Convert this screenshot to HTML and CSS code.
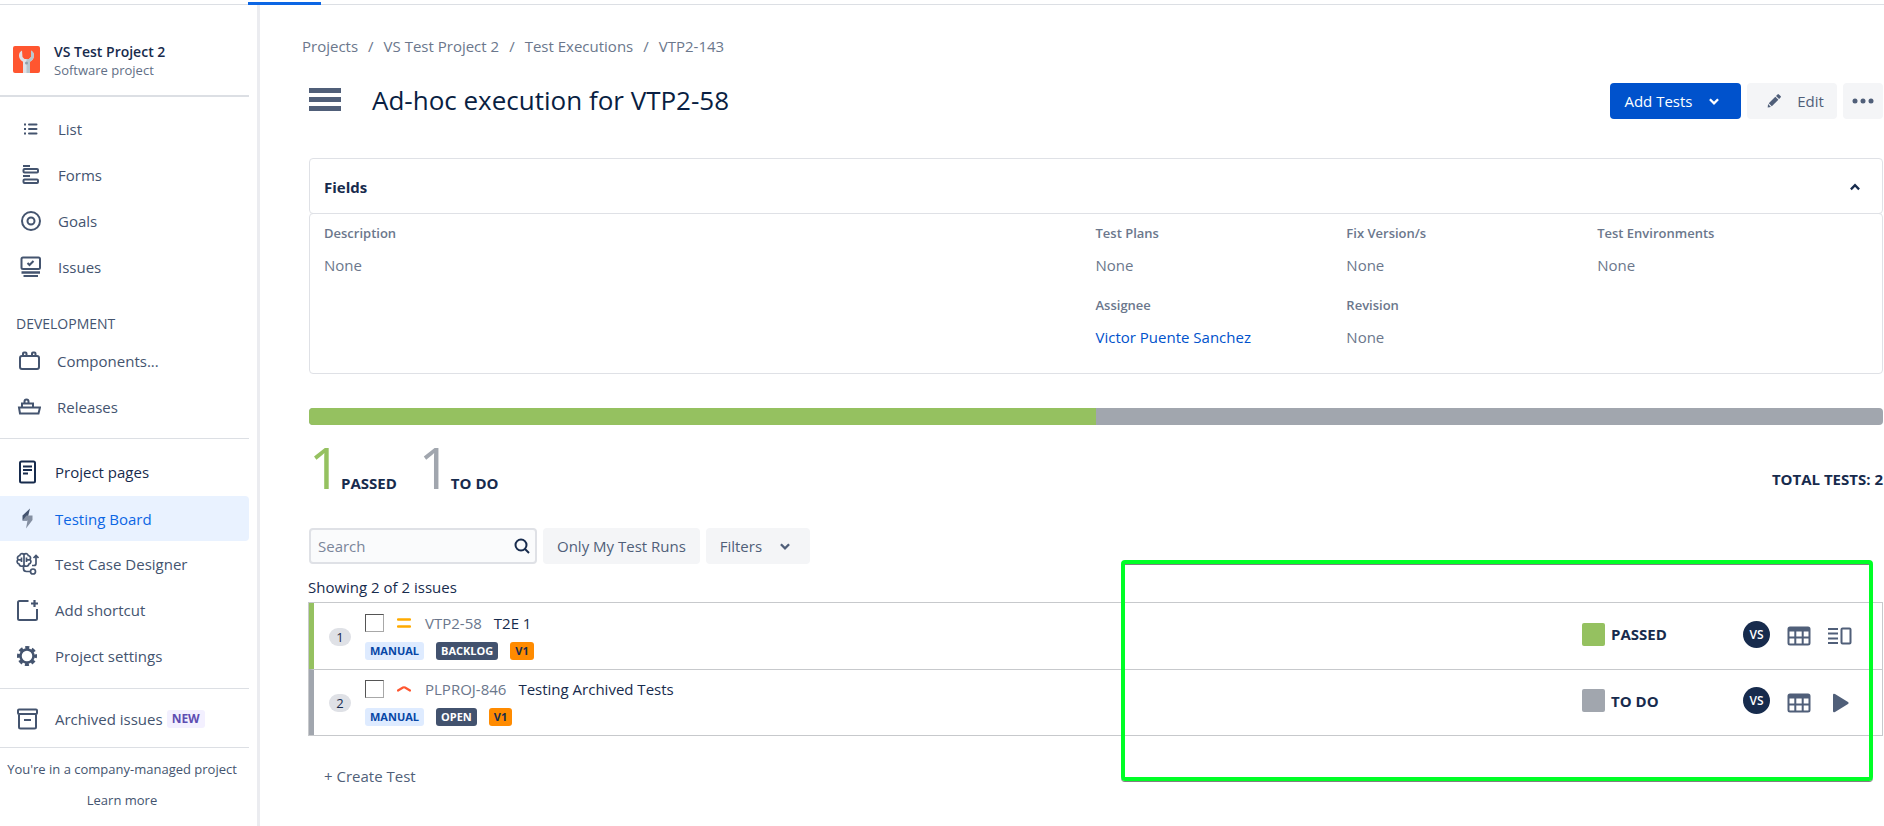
FILE: index.html
```html
<!DOCTYPE html>
<html lang="en">
<head>
<meta charset="utf-8">
<title>Ad-hoc execution for VTP2-58</title>
<link rel="stylesheet" href="styles.css">
</head>
<body>
<header class="topbar"><span class="topbar-tab"></span></header>
<div class="shell">
  <aside class="sidebar">
    <div class="project">
      <svg class="project-logo" viewBox="0 0 27 27"><rect width="27" height="27" rx="2" fill="#ff5630"/><path d="M9 4.500C6 6 5.500 9 6.500 12c.7 1.800 2 3 3.500 3.800V27h7V15.800c1.500-.8 2.800-2 3.500-3.800 1-3 .5-6-2.500-7.500v6.500l-2 2h-4.500l-2-2z" fill="#dfe1e6"/><path d="M18 4.500v6.500l-2 2h-2.500V27H17V15.800c1.500-.8 2.800-2 3.500-3.800 1-3 .5-6-2.500-7.500z" fill="#b8c7ce"/><circle cx="13.500" cy="17" r="1.500" fill="#8fa0aa"/></svg>
      <div><div class="project-name">VS Test Project 2</div><div class="project-type">Software project</div></div>
    </div>
    <nav class="nav nav-plan">
      <a href="#"><svg viewBox="0 0 24 24"><path d="M5 7.500h2M5 12h2M5 16.500h2" stroke-width="2"/><path d="M10 7.500h7.500M10 12h7.500M10 16.500h7.500" stroke-width="2" stroke-linecap="round"/></svg>List</a>
      <a href="#"><svg viewBox="0 0 24 24"><path d="M4 3h7M4 13h7" stroke-width="2"/><rect x="4.500" y="6" width="14.500" height="3.500" rx="1"/><rect x="4.500" y="16.500" width="14.500" height="3.500" rx="1"/></svg>Forms</a>
      <a href="#"><svg viewBox="0 0 24 24"><circle cx="12" cy="12" r="9"/><circle cx="12" cy="12" r="3.500"/></svg>Goals</a>
      <a href="#"><svg viewBox="0 0 24 24"><rect x="2.500" y="2.500" width="18.500" height="11.500" rx="1.500"/><path d="M8.500 8l2 2 4-4"/><path d="M2.500 17.500h18.500" stroke-width="2.500"/><path d="M4.500 21h14.500"/></svg>Issues</a>
    </nav>
    <h2 class="nav-heading">DEVELOPMENT</h2>
    <nav class="nav nav-dev">
      <a href="#"><svg viewBox="0 0 24 24"><rect x="3" y="7" width="19" height="13" rx="2"/><path d="M6 7V4.500q0-1 1-1h1.500q1 0 1 1V7M15 7V4.500q0-1 1-1h1.500q1 0 1 1V7"/></svg>Components...</a>
      <a href="#"><svg viewBox="0 0 24 24"><path d="M2 12.500h21l-1.500 6H3zM5 12V8.500h11v3.500M7.500 8.500V6.500q0-2 2-2t2 2v2"/></svg>Releases</a>
    </nav>
    <nav class="nav nav-tools">
      <a href="#" class="strong"><svg viewBox="0 0 24 24"><rect x="5" y="1.500" width="15" height="21" rx="1.500"/><path d="M8 6.500h9M8 10h9M8 13.500h5"/></svg>Project pages</a>
      <a href="#" class="active"><svg viewBox="0 0 24 24"><path d="M15 1.500L7.500 8.500v5h4.500z" fill="#44546f" stroke="none"/><path d="M11.500 8.500h6V13L11 21.500l1.500-8-5 0z" fill="#8590a2" stroke="none"/></svg>Testing Board</a>
      <a href="#"><svg viewBox="0 0 24 24"><path d="M9 2v13M9 2.500C7 .8 5 2 4.800 3.500 2.500 4 2 6 3 7.500c-1.500 1.500-1 4 1 4.500.5 2.500 3.500 3 5 1M9 2.500c2-1.700 4-.5 4.200 1C15.500 4 16 6 15 7.500c1.500 1.500 1 4-1 4.500-.5 2.500-3.500 3-5 1M6.500 5.500v4.500M11.500 5.500v4.500M3 7.800h3.500M11.500 7.800H15M8.500 15v1.500q0 3 3 3h4M17 13.500h2q2 0 2-2V4M18.500 6L21 3.500 23.500 6" stroke-width="1.700"/><circle cx="18" cy="19.500" r="2.500" stroke-width="1.700"/></svg>Test Case Designer</a>
      <a href="#"><svg viewBox="0 0 24 24"><path d="M13.500 3H4.500Q3 3 3 4.500v16Q3 22 4.500 22h16q1.500 0 1.500-1.500V11"/><path d="M19.500 2v7M16 5.500h7" stroke-width="2.200"/></svg>Add shortcut</a>
      <a href="#"><svg viewBox="0 0 24 24"><circle cx="12" cy="12" r="6.500" stroke-width="2.500"/><circle cx="12" cy="12" r="8.500" stroke-width="3" stroke-dasharray="4 2.676" stroke-dashoffset="2"/></svg>Project settings</a>
    </nav>
    <nav class="nav nav-archive">
      <a href="#"><svg viewBox="0 0 24 24"><rect x="3" y="2.500" width="19" height="4.500" rx="1"/><path d="M4 7.500v12.500q0 1.500 1.500 1.500h14q1.500 0 1.500-1.500V7.500M9 13h7"/></svg>Archived issues <span class="new">NEW</span></a>
    </nav>
    <div class="managed"><p>You're in a company-managed project</p><a href="#">Learn more</a></div>
  </aside>
  <main class="main">
    <nav class="crumbs"><a href="#">Projects</a><span>/</span><a href="#">VS Test Project 2</a><span>/</span><a href="#">Test Executions</a><span>/</span><a href="#">VTP2-143</a></nav>
    <div class="content">
      <div class="titlebar">
        <button class="menu" aria-label="Menu"><i></i><i></i><i></i></button>
        <h1>Ad-hoc execution for VTP2-58</h1>
        <div class="actions">
          <button class="btn primary">Add Tests<svg viewBox="0 0 12 12"><path d="M2.500 4.500L6 8l3.500-3.500"/></svg></button>
          <button class="btn edit"><svg viewBox="0 0 16 16"><path d="M2 10.500L9.500 3l3.500 3.500-7.500 7.500zM10.300 2.200L12 .5q.8-.8 1.600 0l1.900 1.900q.8.800 0 1.600l-1.700 1.700zM1.200 11.500l3.300 3.300L.8 15.500z" fill="currentColor" stroke="none"/></svg>Edit</button>
          <button class="btn more" aria-label="More"><svg viewBox="0 0 22 6"><circle cx="3" cy="3" r="2.500"/><circle cx="11" cy="3" r="2.500"/><circle cx="19" cy="3" r="2.500"/></svg></button>
        </div>
      </div>
      <section class="fields">
        <button class="fields-head">Fields<svg viewBox="0 0 12 12"><path d="M2.500 8L6 4.500 9.500 8"/></svg></button>
        <div class="fields-body">
          <dl class="tall"><dt>Description</dt><dd>None</dd></dl>
          <dl><dt>Test Plans</dt><dd>None</dd></dl>
          <dl><dt>Fix Version/s</dt><dd>None</dd></dl>
          <dl><dt>Test Environments</dt><dd>None</dd></dl>
          <dl><dt>Assignee</dt><dd><a href="#">Victor Puente Sanchez</a></dd></dl>
          <dl><dt>Revision</dt><dd>None</dd></dl>
        </div>
      </section>
      <div class="progress"><span class="passed" style="width:50%"></span></div>
      <div class="summary">
        <div class="count green"><b>1</b>PASSED</div>
        <div class="count gray"><b>1</b>TO DO</div>
        <div class="total">TOTAL TESTS: 2</div>
      </div>
      <div class="filters">
        <div class="search"><input type="text" placeholder="Search" aria-label="Search"><svg viewBox="0 0 16 16"><circle cx="7" cy="7" r="5.500"/><path d="M11 11l4 4"/></svg></div>
        <button class="btn">Only My Test Runs</button>
        <button class="btn drop">Filters<svg viewBox="0 0 12 12"><path d="M2.500 4.500L6 8l3.500-3.500"/></svg></button>
      </div>
      <p class="showing">Showing 2 of 2 issues</p>
      <div class="results">
        <ul class="tests">
          <li class="test green">
            <span class="num">1</span>
            <div class="info">
              <div class="line"><input type="checkbox" aria-label="Select VTP2-58"><svg class="prio" viewBox="0 0 14 14"><path d="M1 3.500h12M1 10.500h12" stroke="#ffab00" stroke-width="2.500" stroke-linecap="round"/></svg><a class="key" href="#">VTP2-58</a><span>T2E 1</span></div>
              <div class="tags"><span class="tag manual">MANUAL</span><span class="tag state">BACKLOG</span><span class="tag version">V1</span></div>
            </div>
            <div class="status"><i></i>PASSED</div>
            <span class="avatar">VS</span>
            <button class="icon" aria-label="Grid"><svg viewBox="0 0 24 24"><rect x="1.500" y="3.500" width="21" height="17" rx="1.500"/><path d="M1 4h22v3.500H1z" fill="currentColor" stroke="none"/><path d="M1 13.500h22M8.300 7v13M15.700 7v13"/></svg></button>
            <button class="icon" aria-label="Details"><svg viewBox="0 0 24 24"><path d="M0 5h10M0 9.500h10M0 14.500h10M0 19h10"/><rect x="13.500" y="4.500" width="9" height="15" rx="1"/></svg></button>
          </li>
          <li class="test gray">
            <span class="num">2</span>
            <div class="info">
              <div class="line"><input type="checkbox" aria-label="Select PLPROJ-846"><svg class="prio" viewBox="0 0 14 14"><path d="M1 8.500l5-3q1-.5 2 0l5 3" fill="none" stroke="#ff5630" stroke-width="2.200" stroke-linecap="round"/></svg><a class="key" href="#">PLPROJ-846</a><span>Testing Archived Tests</span></div>
              <div class="tags"><span class="tag manual">MANUAL</span><span class="tag state">OPEN</span><span class="tag version">V1</span></div>
            </div>
            <div class="status"><i></i>TO DO</div>
            <span class="avatar">VS</span>
            <button class="icon" aria-label="Grid"><svg viewBox="0 0 24 24"><rect x="1.500" y="3.500" width="21" height="17" rx="1.500"/><path d="M1 4h22v3.500H1z" fill="currentColor" stroke="none"/><path d="M1 13.500h22M8.300 7v13M15.700 7v13"/></svg></button>
            <button class="icon" aria-label="Run"><svg viewBox="0 0 24 24"><path d="M5 4q0-2 2-1l13 8q1.500 1 0 2L7 21q-2 1-2-1z" fill="currentColor" stroke="none"/></svg></button>
          </li>
        </ul>
        <div class="highlight"></div>
      </div>
      <button class="create">+ Create Test</button>
    </div>
  </main>
</div>
</body>
</html>
```
FILE: styles.css
```css
* { box-sizing: border-box; }
body { margin: 0; font-family: "Open Sans", "Noto Sans", sans-serif; font-size: 15px; line-height: 20px; color: #172b4d; background: #fff; }
a { color: inherit; text-decoration: none; }
button { font: inherit; color: inherit; border: 0; background: none; padding: 0; }
h1, h2, p, ul, dl, dd { margin: 0; padding: 0; }
svg { fill: none; stroke: currentColor; stroke-width: 2; flex: none; }

.topbar { height: 5px; border-bottom: 1px solid #dcdfe4; padding-left: 248px; }
.topbar-tab { display: block; position: relative; top: 2px; width: 73px; height: 3px; background: #0c66e4; }
.shell { display: flex; min-height: calc(100vh - 5px); }

.sidebar { flex: none; width: 260px; padding-right: 8px; border-right: 3px solid #ebecf0; color: #44546f; }
.project { display: flex; gap: 14px; height: 92px; padding: 38px 0 0 13px; border-bottom: 2px solid #dcdfe4; }
.project-logo { width: 27px; height: 27px; margin-top: 3px; stroke: none; }
.project-name { font-weight: 600; font-size: 14px; line-height: 18px; color: #172b4d; }
.project-type { font-size: 13px; line-height: 18px; color: #626f86; }
.nav a { display: flex; align-items: center; height: 46px; }
.nav svg { width: 24px; height: 24px; }
.nav-plan { padding: 9px 0 0 19px; }
.nav-plan svg { margin-right: 15px; }
.nav-heading { padding: 24px 0 4px 16px; font-size: 14px; line-height: 20px; font-weight: 400; }
.nav-dev { height: 101px; padding: 0 0 0 17px; border-bottom: 1px solid #dcdfe4; }
.nav-dev svg { margin-right: 16px; }
.nav-tools { height: 250px; padding-top: 9px; border-bottom: 1px solid #dcdfe4; }
.nav-tools a, .nav-archive a { padding-left: 15px; }
.nav-tools svg, .nav-archive svg { margin-right: 16px; }
.nav .strong { height: 48px; color: #172b4d; }
.nav .active { height: 45px; background: #e9f2ff; color: #0c66e4; border-radius: 0 4px 4px 0; }
.nav-archive { height: 59px; padding-top: 7px; border-bottom: 1px solid #dcdfe4; }
.new { margin-left: 4px; padding: 0 5px; font-size: 12px; line-height: 18px; font-weight: 700; color: #5e4db2; background: #f3f0ff; border-radius: 3px; }
.managed { padding: 11px 5px 0 0; text-align: center; font-size: 13px; }
.managed p { margin-bottom: 11px; }

.main { flex: 1; min-width: 0; padding: 31px 1px 0 42px; }
.crumbs { display: flex; gap: 10px; color: #6b778c; }
.content { padding-left: 7px; }
.titlebar { display: flex; align-items: center; margin-top: 25px; height: 40px; }
.menu { display: grid; gap: 4px; width: 32px; margin: 0 31px 4px 0; }
.menu i { height: 5px; background: #505f79; }
h1 { font-size: 26px; line-height: 32px; padding-bottom: 2px; font-weight: 400; color: #091e42; }
.actions { display: flex; gap: 6px; margin-left: auto; }
.btn { display: flex; align-items: center; justify-content: center; height: 36px; padding: 0 14px; border-radius: 4px; background: #f4f5f7; color: #505f79; white-space: nowrap; }
.btn svg { width: 14px; height: 14px; }
.primary { width: 131px; gap: 14px; padding: 0 18px 0 12px; background: #0052cc; color: #fff; }
.edit { width: 90px; gap: 16px; padding: 0 14px 0 21px; }
.more { width: 40px; padding: 0; }
.btn.more svg { width: 22px; height: 6px; fill: currentColor; stroke: none; }
.fields { margin-top: 37px; }
.fields-head { display: flex; width: 100%; justify-content: space-between; align-items: center; height: 56px; padding: 2px 20px 0 14px; border: 1px solid #dfe1e6; border-radius: 4px; font-weight: 700; }
.fields-head svg { width: 14px; height: 14px; }
.fields-body { display: grid; grid-template-columns: 772fr 251fr 251fr 285fr; row-gap: 20px; margin-top: -1px; padding: 9px 0 26px 14px; border: 1px solid #dfe1e6; border-radius: 4px; color: #6b778c; }
.tall { grid-row: span 2; }
dt { margin-bottom: 12px; font-size: 13px; font-weight: 600; }
dd a { color: #0052cc; }
.progress { margin-top: 34px; height: 17px; border-radius: 4px; overflow: hidden; background: #a1a6ae; }
.passed { display: block; height: 100%; background: #95c160; }
.summary { display: flex; align-items: flex-start; gap: 22px; height: 103px; font-weight: 700; }
.count { display: flex; align-items: baseline; line-height: 84px; }
.count b { font-size: 56px; font-weight: 400; }
.count.green b { color: #95c160; }
.count.gray b { color: #a1a6ae; }
.total { margin: 44px 0 0 auto; }
.filters { display: flex; gap: 6px; }
.search { display: flex; align-items: center; width: 228px; height: 36px; padding: 0 5px 0 7px; border: 2px solid #dfe1e6; border-radius: 4px; background: #fafbfc; }
.search input { flex: 1; min-width: 0; padding: 0; border: 0; outline: 0; background: none; font: inherit; color: inherit; }
.search input::placeholder { color: #7a869a; opacity: 1; }
.search svg { width: 16px; height: 16px; }
.drop { width: 104px; gap: 16px; padding-right: 18px; }
.showing { margin: 13px 0 5px -1px; }
.results { position: relative; margin-left: -1px; }
.tests { list-style: none; border: 1px solid #c7c9cc; }
.test { display: flex; align-items: center; height: 66px; padding: 0 30px 4px 0; border-left: 5px solid #95c160; }
.test.gray { border-left-color: #a1a6ae; }
.test + .test { border-top: 1px solid #c7c9cc; }
.num { width: 22px; margin: 5px 14px 0 15px; border-radius: 9px; background: #dfe1e6; font-size: 13px; line-height: 18px; text-align: center; }
.info { margin-top: 4px; }
.line { display: flex; align-items: center; height: 20px; }
.line input { appearance: none; width: 19px; height: 18px; margin: 0 13px 0 0; border: 1px solid #a8a8a8; border-top-color: #555; border-left-color: #555; background: #fff; }
.prio { width: 14px; height: 14px; margin-right: 14px; }
.key { margin-right: 12px; color: #6b778c; }
.tags { display: flex; gap: 12px; margin-top: 9px; }
.tag { padding: 0 5px; border-radius: 3px; font-size: 11px; line-height: 18px; font-weight: 700; }
.manual { background: #deebff; color: #0747a6; }
.state { background: #42526e; color: #fff; }
.version { background: #ff8b00; color: #172b4d; }
.status { display: flex; align-items: center; gap: 6px; width: 161px; margin-left: auto; font-weight: 700; }
.status i { width: 23px; height: 23px; border-radius: 2px; background: #95c160; }
.gray .status i { background: #a1a6ae; }
.avatar { width: 27px; height: 27px; border-radius: 50%; background: #172b4d; color: #fff; font-size: 12px; font-weight: 600; line-height: 27px; text-align: center; }
.icon { display: flex; margin: 4px 0 0 17px; color: #505f79; }
.icon svg { width: 24px; height: 24px; }
.highlight { position: absolute; top: -42px; right: 10px; bottom: -45px; width: 752px; border: 4px solid #00ff26; border-radius: 4px; box-shadow: 0 1px 0 #808080, inset 0 1px 0 #808080; pointer-events: none; }
.create { display: block; margin: 30px 0 0 15px; color: #505f79; }
```
